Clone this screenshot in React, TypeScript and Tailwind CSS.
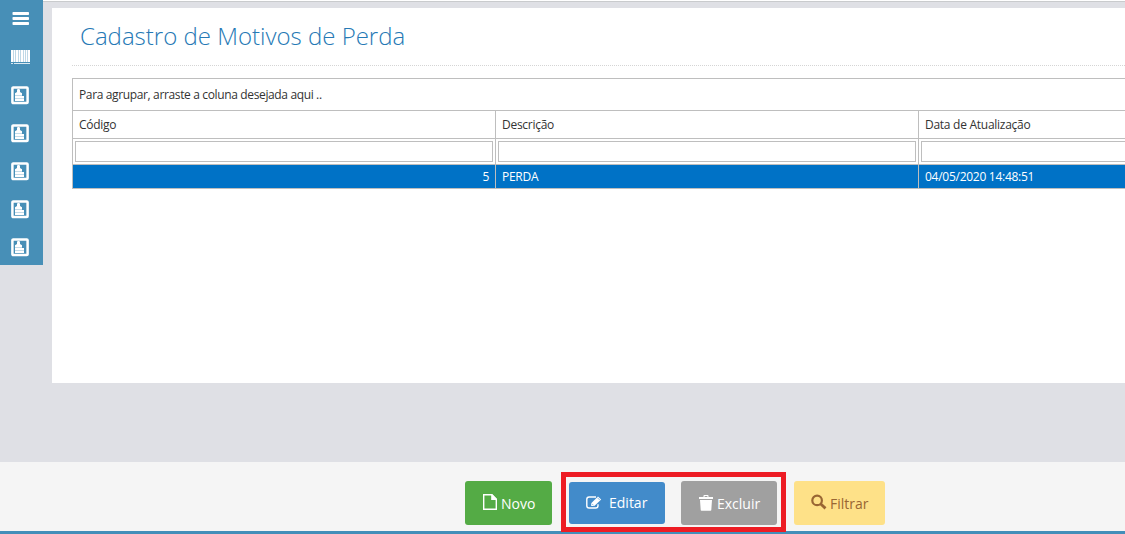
import React from "react";

const columns = ["Código", "Descrição", "Data de Atualização"];

const MenuIcon: React.FC = () => (
  <svg width="18" height="14" viewBox="0 0 18 14" fill="white">
    <rect x="0.5" y="0" width="16.5" height="3" rx="0.8" />
    <rect x="0.5" y="5" width="16.5" height="3" rx="0.8" />
    <rect x="0.5" y="10" width="16.5" height="3" rx="0.8" />
  </svg>
);

const BarcodeIcon: React.FC = () => (
  <svg width="20" height="14" viewBox="0 0 20 14" fill="white">
    <path d="M0 0h2v12H0zM3 0h1v12H3zM5 0h2v12H5zM8 0h1v12H8zM10 0h2v12h-2zM13 0h1v12h-1zM15 0h1v12h-1zM17 0h2v12h-2z" />
    <path d="M0 0h19v12H0z" opacity="0.65" />
    <path d="M0 13h2v1H0zM3 13h16v1H3z" opacity="0.8" />
  </svg>
);

const CardIcon: React.FC = () => (
  <svg width="18" height="19" viewBox="0 0 18 19">
    <rect x="1.4" y="1.4" width="15.2" height="15.7" rx="0.8" fill="none" stroke="white" strokeWidth="2.5" />
    <path fill="white" d="M6 4.2C6 3.4 6.6 3 7.5 3s1.5.4 1.5 1.2V6l2 1.2V9H4V7.2L6 6z" />
    <path fill="white" d="M4 10h9v2H4zM4 13h9v2H4z" />
    <path fill="#c3dbe8" d="M4 9h7v1H4zM4 12h9v1H4z" />
  </svg>
);

const FileIcon: React.FC = () => (
  <svg width="14" height="16" viewBox="0 0 14 16" fill="none" stroke="white" strokeWidth="1.4">
    <path d="M0.7 0.7h8.2l4.4 4.5v10.1H0.7z" />
    <path fill="white" d="M8.9 0.9v4.3h4.3z" />
  </svg>
);

const EditIcon: React.FC = () => (
  <svg width="16" height="13" viewBox="0 0 16 13" fill="none" stroke="white">
    <path strokeWidth="1.4" d="M10 1H3.2C1.8 1 .8 2 .8 3.3v6.4C.8 11 1.8 12 3.2 12h6.4c1.4 0 2.4-1 2.4-2.3V8.3" />
    <path fill="white" stroke="none" d="M5.2 10V7.2L12 .4 15.2 3.4 8.3 10z" />
    <path stroke="#428bca" strokeWidth="0.6" d="M6 7.8l1.6 1.6M11.4 1.7l2.5 2.5" />
  </svg>
);

const TrashIcon: React.FC = () => (
  <svg width="14" height="16" viewBox="0 0 14 16" fill="white">
    <path d="M0 2h4.5V.8c0-.5.3-.8.8-.8h3.4c.5 0 .8.3.8.8V2H14v2H0zM5.6 1v1h2.8V1z" fillRule="evenodd" />
    <path d="M1 5h12l-.7 10c0 .5-.3.8-.8.8h-9c-.5 0-.8-.3-.8-.8z" />
  </svg>
);

const SearchIcon: React.FC = () => (
  <svg width="16" height="16" viewBox="0 0 16 16" fill="none" stroke="#996633" strokeWidth="2.2">
    <circle cx="6.1" cy="6.4" r="4.8" />
    <path strokeWidth="2.8" d="M9.5 9.8l5 4.6" />
  </svg>
);

const App: React.FC = () => {
  return (
    <div className="relative flex h-[534px] w-[1125px] flex-col overflow-hidden bg-[#dfe0e5] font-['Open_Sans',sans-serif]">
      <div className="flex h-[462px] shrink-0">
        <aside className="flex h-[265px] w-[43px] shrink-0 flex-col bg-[#478fb7]">
          <div className="flex h-[38px] shrink-0 pl-[11.5px] pt-3">
            <MenuIcon />
          </div>
          <div className="flex h-[38px] shrink-0 pl-[11px] pt-3">
            <BarcodeIcon />
          </div>
          {[1, 2, 3, 4, 5].map((item) => (
            <div key={item} className="flex h-[38px] shrink-0 pl-[11px] pt-[10px]">
              <CardIcon />
            </div>
          ))}
        </aside>

        <div className="flex min-w-0 flex-1 flex-col">
          <div className="h-[2px] shrink-0 border-b border-[#c9cbcd] bg-white" />
          <main className="ml-[9px] mt-[6px] h-[375px] bg-white pl-5">
            <div className="h-[58px] border-b border-dotted border-[#d5d5d5] pl-2 pt-[11px]">
              <h1 className="whitespace-nowrap text-[24px] font-light leading-[34px] text-[#2679b5]">
                Cadastro de Motivos de Perda
              </h1>
            </div>

            <div className="mt-3 w-[1270px] border border-[#bebebe] text-[12px] tracking-[-0.27px] text-[#333333]">
              <div className="flex h-8 items-center border-b border-[#bebebe] pl-[6px] tracking-[-0.36px]">
                Para agrupar, arraste a coluna desejada aqui ..
              </div>
              <div className="flex h-7 border-b border-[#bebebe]">
                {columns.map((col) => (
                  <div key={col} className="flex w-[423px] shrink-0 items-center border-r border-[#bebebe] pl-[6px]">
                    {col}
                  </div>
                ))}
              </div>
              <div className="flex h-[26px] border-b border-[#bebebe]">
                {columns.map((col) => (
                  <div key={col} className="w-[423px] shrink-0 border-r border-[#bebebe] px-[2px] pt-[2px]">
                    <div className="h-[21px] border border-[#bebebe]" />
                  </div>
                ))}
              </div>
              <div className="flex h-[23px] bg-[#0072c6] leading-[23px] text-white">
                <div className="w-[423px] shrink-0 border-r border-[#bebebe] pr-[6px] text-right">5</div>
                <div className="w-[423px] shrink-0 border-r border-[#bebebe] pl-[6px]">PERDA</div>
                <div className="w-[423px] shrink-0 border-r border-[#bebebe] pl-[6px]">04/05/2020 14:48:51</div>
              </div>
            </div>
          </main>
        </div>
      </div>

      <footer className="flex h-[72px] shrink-0 items-start border-b-[3px] border-[#438eb9] bg-[#f5f5f5] pl-[465px] pt-[19px] text-[14px] leading-[20px] text-white [text-shadow:0_-1px_0_rgba(0,0,0,0.25)]">
        <button className="flex h-11 w-[87px] rounded-[3px] bg-[#54ab45] pl-[18px] pt-[13px]">
          <FileIcon />
          <span className="ml-1">Novo</span>
        </button>
        <button className="ml-[17px] mt-px flex h-[42px] w-24 rounded-[3px] bg-[#428bca] pl-[17px] pt-[11px]">
          <span className="mt-[3px]"><EditIcon /></span>
          <span className="ml-[7px]">Editar</span>
        </button>
        <button className="ml-4 flex h-11 w-24 rounded-[3px] bg-[#a0a0a0] pl-[18px] pt-[13px]">
          <span className="mt-px"><TrashIcon /></span>
          <span className="ml-1">Excluir</span>
        </button>
        <button className="ml-[17px] flex h-11 w-[91px] rounded-[3px] bg-[#fee188] pl-[17px] pt-[13px] text-[#996633] [text-shadow:none]">
          <SearchIcon />
          <span className="ml-[3px]">Filtrar</span>
        </button>
      </footer>

      {/* highlight around the edit and delete actions */}
      <div className="pointer-events-none absolute left-[561px] top-[472px] h-[60px] w-[225px] border-[5px] border-[#ed1c24]" />
    </div>
  );
};

export default App;
